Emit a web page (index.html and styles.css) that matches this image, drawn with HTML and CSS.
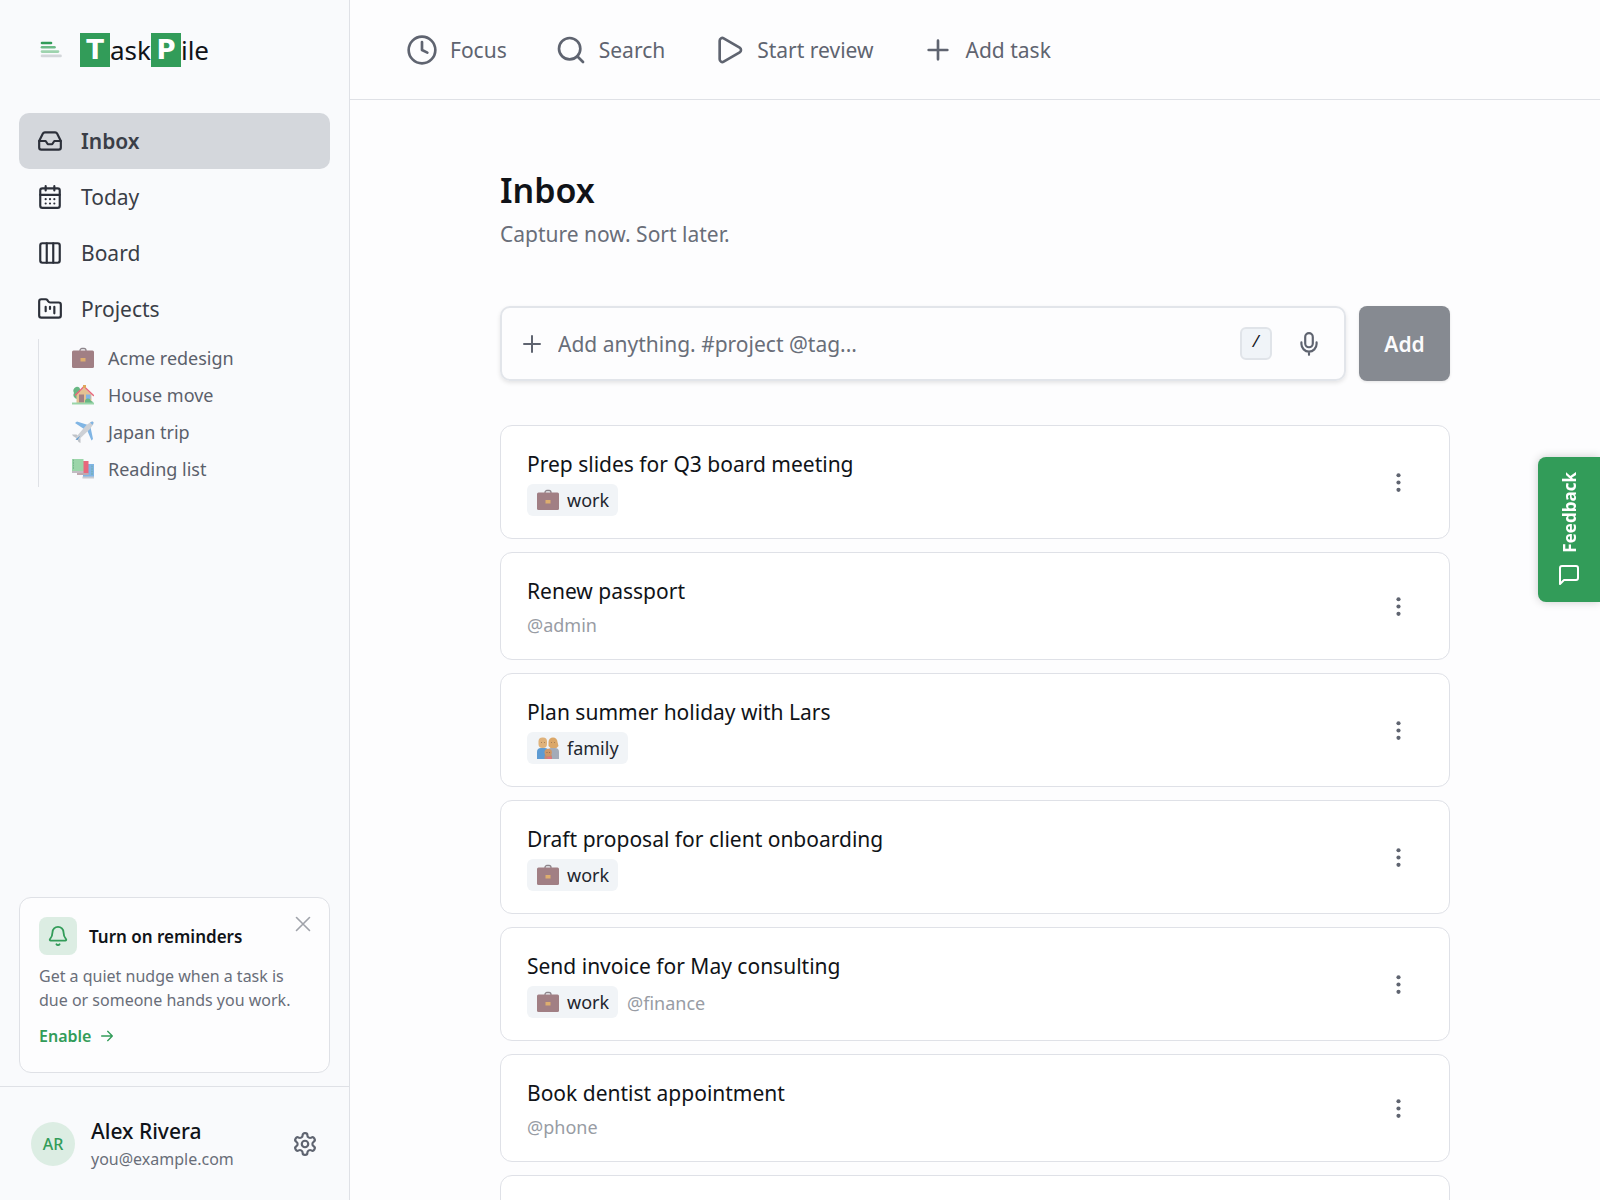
FILE: index.html
```html
<!DOCTYPE html>
<html lang="en">
<head>
    <meta charset="UTF-8">
    <meta name="viewport" content="width=device-width, initial-scale=1.0">
    <title>TaskPile - Inbox</title>
    <link rel="stylesheet" href="styles.css">
</head>
<body>
    <!-- Shared icons -->
    <svg class="sprite" aria-hidden="true">
        <symbol id="dots" viewBox="0 0 24 24">
            <circle cx="12" cy="5" r="2"/><circle cx="12" cy="12" r="2"/><circle cx="12" cy="19" r="2"/>
        </symbol>
        <symbol id="plus" viewBox="0 0 24 24"><path d="M4 12h16M12 4v16"/></symbol>
        <symbol id="briefcase" viewBox="0 0 22 22">
            <path d="M8 4.500V3.500a2 2 0 0 1 2-2h2a2 2 0 0 1 2 2v1" fill="none" stroke="#8d858b" stroke-width="1.300"/>
            <rect x="0" y="3.500" width="22" height="17.500" rx="1.500" fill="#a17f84"/>
            <rect x="8.500" y="11" width="5" height="3.500" fill="#deae6e"/>
        </symbol>
        <symbol id="family" viewBox="0 0 22 22">
            <path d="M0 22v-7a4 4 0 0 1 4-4h4a3 3 0 0 1 3 3v8z" fill="#5d9bd3"/>
            <path d="M11 22v-8a3 3 0 0 1 3-3h4a4 4 0 0 1 4 4v7z" fill="#a3abb8"/>
            <rect x="1.500" y="0.500" width="8.500" height="10.500" rx="4" fill="#dfb27b"/>
            <path d="M11.500 5a4.500 4.500 0 0 1 9 0l1 4-2 2h-6l-2-2z" fill="#dba768"/>
            <circle cx="4.500" cy="5.500" r="0.500" fill="#97744f"/><circle cx="7.500" cy="5.500" r="0.500" fill="#97744f"/>
            <circle cx="14.500" cy="5.500" r="0.500" fill="#97744f"/><circle cx="17.500" cy="5.500" r="0.500" fill="#97744f"/>
            <path d="M7.500 22v-2a3 3 0 0 1 3-3h1.500a3 3 0 0 1 3 3v2z" fill="#c78872"/>
            <circle cx="11.200" cy="15.500" r="3.700" fill="#cf9766"/>
            <circle cx="10" cy="15.500" r="0.500" fill="#7f5d45"/><circle cx="12.600" cy="15.500" r="0.500" fill="#7f5d45"/>
            <rect x="10.500" y="20" width="4" height="2" fill="#e6737f"/>
        </symbol>
    </svg>

    <div class="app">
        <aside class="sidebar">
            <div class="brand">
                <svg class="brand-icon" viewBox="0 0 22 18">
                    <path d="M2 2h9" stroke="#329c59"/>
                    <path d="M2 6.300h12.500" stroke="#6cba87"/>
                    <path d="M2 10.600h16" stroke="#9ed3ae"/>
                    <path d="M2 14.900h18.500" stroke="#d3d6da"/>
                </svg>
                <div class="brand-name"><span class="brand-box">T</span>ask<span class="brand-box">P</span>ile</div>
            </div>

            <nav class="nav">
                <a href="#" class="nav-link active">
                    <svg class="icon" viewBox="0 0 24 24"><path d="M22 12h-6l-2 3h-4l-2-3H2"/><path d="M5.450 5.110 2 12v6a2 2 0 0 0 2 2h16a2 2 0 0 0 2-2v-6l-3.450-6.890A2 2 0 0 0 16.760 4H7.240a2 2 0 0 0-1.790 1.110z"/></svg>
                    Inbox
                </a>
                <a href="#" class="nav-link">
                    <svg class="icon" viewBox="0 0 24 24"><rect x="3" y="4" width="18" height="18" rx="2"/><path d="M8 2v4M16 2v4M3 10h18M8 14h.01M12 14h.01M16 14h.01M8 18h.01M12 18h.01M16 18h.01"/></svg>
                    Today
                </a>
                <a href="#" class="nav-link">
                    <svg class="icon" viewBox="0 0 24 24"><rect x="3" y="3" width="18" height="18" rx="2"/><path d="M9 3v18M15 3v18"/></svg>
                    Board
                </a>
                <a href="#" class="nav-link">
                    <svg class="icon" viewBox="0 0 24 24"><path d="M4 20h16a2 2 0 0 0 2-2V8a2 2 0 0 0-2-2h-7.930a2 2 0 0 1-1.660-.9l-.820-1.200A2 2 0 0 0 7.930 3H4a2 2 0 0 0-2 2v13c0 1.100.9 2 2 2Z"/><path d="M8 10v4M12 10v2M16 10v6"/></svg>
                    Projects
                </a>
                <div class="project-list">
                    <a href="#" class="project-link">
                        <svg class="emoji"><use href="#briefcase"/></svg>
                        Acme redesign
                    </a>
                    <a href="#" class="project-link">
                        <svg class="emoji" viewBox="0 0 22 22">
                            <path d="M4 3a3 3 0 0 1 4 2v13H5v-3a4 4 0 0 1-3-6 4 4 0 0 1 2-6z" fill="#68b784"/>
                            <path d="M4.500 10.500 12 3.500l7.500 7V19h-15z" fill="#e3c193"/>
                            <path d="M3.500 11 12 2.500l9.500 9" fill="none" stroke="#e8687c" stroke-width="1.500"/>
                            <rect x="11" y="1" width="3" height="3" fill="#dfa65c"/>
                            <rect x="7" y="10.500" width="5" height="8" fill="#a17f84"/>
                            <rect x="14" y="10.500" width="4.500" height="4.500" fill="#80b5e4"/>
                            <path d="M13 18a3 3 0 0 1 6-1 2 2 0 0 1 2 2h-8z" fill="#68b784"/>
                            <rect x="0" y="18.500" width="22" height="2" fill="#9bd5a9"/>
                        </svg>
                        House move
                    </a>
                    <a href="#" class="project-link">
                        <svg class="emoji" viewBox="0 0 22 22">
                            <path d="M3 2 5 .5l11 3.500-4 4zM21 18l-1.500 1.500L15 9l3.500-3z" fill="#80b5e4"/>
                            <path d="M0 13.500h4.500l4 4V22l-2-1-1.500-3.500L1 15z" fill="#bfc2c7"/>
                            <path d="M19.500.5c2 0 2.500.5 2 2.500L18 8 7 18.500 4 19l.5-3.500L14.500 4z" fill="#cdd0d5"/>
                            <path d="M18 1.500 20.500 4l1-2.500-1-1z" fill="#80b5e4"/>
                            <path d="m3.500 18.500 5-4-3 4.500z" fill="#5d9bd3"/>
                        </svg>
                        Japan trip
                    </a>
                    <a href="#" class="project-link">
                        <svg class="emoji" viewBox="0 0 22 22">
                            <rect x="11" y="6" width="11" height="13" fill="#80b5e4"/>
                            <rect x="10.500" y="18.500" width="11.500" height="2" fill="#c7cad0"/>
                            <rect x="6" y="3" width="10.500" height="12.500" fill="#e8687c"/>
                            <rect x="5" y="15" width="11.500" height="2" fill="#bfa9b0"/>
                            <rect x="0" y="1" width="11.500" height="12" fill="#9bd5a9"/>
                            <rect x="0" y="13" width="11.500" height="2" fill="#c1bcc2"/>
                            <path d="M1.500 2v10M20 8v9" stroke="#68a884" stroke-width="0.700" stroke-dasharray="1 1.500"/>
                        </svg>
                        Reading list
                    </a>
                </div>
            </nav>

            <section class="reminder">
                <div class="reminder-top">
                    <span class="reminder-icon">
                        <svg viewBox="0 0 24 24"><path d="M10.300 21a1.940 1.940 0 0 0 3.400 0"/><path d="M3.260 15.330A1 1 0 0 0 4 17h16a1 1 0 0 0 .740-1.670C19.410 13.960 18 12.500 18 8A6 6 0 0 0 6 8c0 4.500-1.410 5.960-2.740 7.330"/></svg>
                    </span>
                    <h2>Turn on reminders</h2>
                    <button class="close-btn" aria-label="Dismiss">
                        <svg viewBox="0 0 24 24"><path d="M18 6 6 18M6 6l12 12"/></svg>
                    </button>
                </div>
                <p>Get a quiet nudge when a task is due or someone hands you work.</p>
                <a href="#" class="enable-link">
                    Enable
                    <svg viewBox="0 0 24 24"><path d="M4 12h16M13 5l7 7-7 7"/></svg>
                </a>
            </section>

            <footer class="account">
                <div class="avatar">AR</div>
                <div class="account-info">
                    <div class="account-name">Alex Rivera</div>
                    <div class="account-email">you@example.com</div>
                </div>
                <button class="icon-btn" aria-label="Settings">
                    <svg class="icon" viewBox="0 0 24 24"><path d="M12.220 2h-.440a2 2 0 0 0-2 2v.180a2 2 0 0 1-1 1.730l-.430.250a2 2 0 0 1-2 0l-.150-.080a2 2 0 0 0-2.730.730l-.220.380a2 2 0 0 0 .730 2.730l.150.100a2 2 0 0 1 1 1.720v.510a2 2 0 0 1-1 1.740l-.150.090a2 2 0 0 0-.730 2.730l.220.380a2 2 0 0 0 2.730.730l.150-.080a2 2 0 0 1 2 0l.430.250a2 2 0 0 1 1 1.730V20a2 2 0 0 0 2 2h.440a2 2 0 0 0 2-2v-.180a2 2 0 0 1 1-1.730l.430-.250a2 2 0 0 1 2 0l.150.080a2 2 0 0 0 2.730-.730l.220-.390a2 2 0 0 0-.730-2.730l-.150-.080a2 2 0 0 1-1-1.740v-.5a2 2 0 0 1 1-1.740l.150-.090a2 2 0 0 0 .730-2.730l-.220-.380a2 2 0 0 0-2.730-.730l-.150.080a2 2 0 0 1-2 0l-.430-.250a2 2 0 0 1-1-1.730V4a2 2 0 0 0-2-2z"/><circle cx="12" cy="12" r="3"/></svg>
                </button>
            </footer>
        </aside>

        <div class="page">
            <header class="topbar">
                <button class="top-btn">
                    <svg viewBox="0 0 24 24"><circle cx="12" cy="12" r="10"/><path d="M12 6v6l4 2"/></svg>
                    Focus
                </button>
                <button class="top-btn">
                    <svg viewBox="0 0 24 24"><circle cx="11" cy="11" r="8"/><path d="m21 21-4.300-4.300"/></svg>
                    Search
                </button>
                <button class="top-btn">
                    <svg viewBox="0 0 24 24"><path d="M5 5a2 2 0 0 1 3.008-1.728l11.997 6.998a2 2 0 0 1 .003 3.458l-12 7A2 2 0 0 1 5 19z"/></svg>
                    Start review
                </button>
                <button class="top-btn">
                    <svg viewBox="0 0 24 24"><path d="M5 12h14M12 5v14"/></svg>
                    Add task
                </button>
            </header>

            <main class="content">
                <h1>Inbox</h1>
                <p class="subtitle">Capture now. Sort later.</p>

                <form class="add-form">
                    <div class="add-field">
                        <svg class="icon-small"><use href="#plus"/></svg>
                        <input type="text" aria-label="New task" placeholder="Add anything. #project @tag...">
                        <kbd>/</kbd>
                        <button type="button" class="icon-btn" aria-label="Dictate">
                            <svg class="icon" viewBox="0 0 24 24"><rect x="8.500" y="2" width="7" height="13" rx="3.500"/><path d="M5 10.500V12a7 7 0 0 0 14 0v-1.500M12 19v3"/></svg>
                        </button>
                    </div>
                    <button type="submit" class="add-btn">Add</button>
                </form>

                <div class="tasks">
                    <article class="task">
                        <div class="task-body">
                            <h3>Prep slides for Q3 board meeting</h3>
                            <div class="task-meta">
                                <span class="chip"><svg class="emoji"><use href="#briefcase"/></svg>work</span>
                            </div>
                        </div>
                        <button class="menu-btn" aria-label="Task menu"><svg><use href="#dots"/></svg></button>
                    </article>
                    <article class="task">
                        <div class="task-body">
                            <h3>Renew passport</h3>
                            <div class="task-meta"><span class="tag">@admin</span></div>
                        </div>
                        <button class="menu-btn" aria-label="Task menu"><svg><use href="#dots"/></svg></button>
                    </article>
                    <article class="task">
                        <div class="task-body">
                            <h3>Plan summer holiday with Lars</h3>
                            <div class="task-meta">
                                <span class="chip"><svg class="emoji"><use href="#family"/></svg>family</span>
                            </div>
                        </div>
                        <button class="menu-btn" aria-label="Task menu"><svg><use href="#dots"/></svg></button>
                    </article>
                    <article class="task">
                        <div class="task-body">
                            <h3>Draft proposal for client onboarding</h3>
                            <div class="task-meta">
                                <span class="chip"><svg class="emoji"><use href="#briefcase"/></svg>work</span>
                            </div>
                        </div>
                        <button class="menu-btn" aria-label="Task menu"><svg><use href="#dots"/></svg></button>
                    </article>
                    <article class="task">
                        <div class="task-body">
                            <h3>Send invoice for May consulting</h3>
                            <div class="task-meta">
                                <span class="chip"><svg class="emoji"><use href="#briefcase"/></svg>work</span>
                                <span class="tag">@finance</span>
                            </div>
                        </div>
                        <button class="menu-btn" aria-label="Task menu"><svg><use href="#dots"/></svg></button>
                    </article>
                    <article class="task">
                        <div class="task-body">
                            <h3>Book dentist appointment</h3>
                            <div class="task-meta"><span class="tag">@phone</span></div>
                        </div>
                        <button class="menu-btn" aria-label="Task menu"><svg><use href="#dots"/></svg></button>
                    </article>
                    <article class="task empty"></article>
                </div>
            </main>
        </div>
    </div>

    <button class="feedback">
        <span>Feedback</span>
        <svg viewBox="0 0 24 24"><path d="M21 15a2 2 0 0 1-2 2H7l-4 4V5a2 2 0 0 1 2-2h14a2 2 0 0 1 2 2z"/></svg>
    </button>
</body>
</html>
```
FILE: styles.css
```css
*, *:before, *:after {
    margin: 0;
    padding: 0;
    box-sizing: border-box;
}

body {
    font-family: "Noto Sans", sans-serif;
    font-size: 21px;
    color: #101318;
    background-color: #fdfdfe;
}

button {
    font: inherit;
    color: inherit;
    background: none;
    border: none;
    cursor: pointer;
}

a {
    color: inherit;
    text-decoration: none;
}

svg {
    flex-shrink: 0;
    display: block;
    fill: none;
    stroke: currentColor;
    stroke-width: 2;
    stroke-linecap: round;
    stroke-linejoin: round;
}

.sprite {
    display: none;
}

.icon {
    width: 26px;
    height: 26px;
}

.icon-small {
    width: 24px;
    height: 24px;
}

.emoji {
    width: 22px;
    height: 22px;
    stroke: none;
}

.app {
    display: flex;
    height: 100vh;
    overflow: hidden;
}

/* Sidebar */
.sidebar {
    width: 350px;
    flex-shrink: 0;
    display: flex;
    flex-direction: column;
    background-color: #f9fafc;
    border-right: 1px solid #dfe1e6;
}

.brand {
    display: flex;
    align-items: center;
    gap: 18px;
    height: 100px;
    padding-left: 40px;
}

.brand-icon {
    width: 22px;
    height: 18px;
    stroke-width: 2.6;
}

.brand-name {
    display: flex;
    align-items: center;
    font-size: 26px;
    line-height: 34px;
}

.brand-box {
    width: 30px;
    text-align: center;
    font-family: "DejaVu Sans", sans-serif;
    font-weight: 700;
    color: #fff;
    background-color: #329c59;
}

.nav {
    flex: 1;
    padding: 13px 19px;
}

.nav-link {
    display: flex;
    align-items: center;
    gap: 18px;
    height: 56px;
    padding: 0 18px;
    border-radius: 10px;
    color: #3a3e47;
}

.nav-link.active {
    font-weight: 600;
    background-color: #d4d7dc;
}

.nav-link svg {
    color: #2c303a;
}

.project-list {
    margin: 2px 0 0 19px;
    padding-left: 33px;
    border-left: 1px solid #dfe1e6;
}

.project-link {
    display: flex;
    align-items: center;
    gap: 14px;
    height: 37px;
    font-size: 18px;
    color: #5b606b;
}

.reminder {
    margin: 0 19px 13px;
    padding: 19px 19px 24px;
    border: 1px solid #dfe1e6;
    border-radius: 12px;
    background-color: #fdfdfe;
}

.reminder-top {
    display: flex;
    align-items: center;
    gap: 12px;
    margin-bottom: 9px;
}

.reminder-icon {
    display: flex;
    align-items: center;
    justify-content: center;
    width: 38px;
    height: 38px;
    border-radius: 8px;
    color: #329c59;
    background-color: #dcede3;
}

.reminder-icon svg {
    width: 22px;
    height: 22px;
}

.reminder h2 {
    flex: 1;
    font-size: 17px;
    font-weight: 600;
}

.close-btn {
    align-self: flex-start;
    margin-top: -6px;
    margin-right: -6px;
    color: #a0a3aa;
}

.close-btn svg {
    width: 26px;
    height: 26px;
    stroke-width: 1.5;
}

.reminder p {
    font-size: 16px;
    line-height: 24px;
    color: #696e79;
}

.enable-link {
    display: inline-flex;
    align-items: center;
    gap: 8px;
    margin-top: 12px;
    font-size: 16px;
    line-height: 24px;
    font-weight: 600;
    color: #329c59;
}

.enable-link svg {
    width: 16px;
    height: 16px;
}

.account {
    display: flex;
    align-items: center;
    gap: 16px;
    height: 114px;
    padding: 0 31px;
    border-top: 1px solid #dfe1e6;
}

.avatar {
    width: 44px;
    height: 44px;
    border-radius: 50%;
    font-size: 16px;
    line-height: 44px;
    font-weight: 500;
    text-align: center;
    color: #329c59;
    background-color: #dcede3;
}

.account-info {
    flex: 1;
}

.account-name {
    line-height: 30px;
    font-weight: 500;
}

.account-email {
    font-size: 16px;
    line-height: 26px;
    color: #696e79;
}

.icon-btn {
    color: #5f6470;
}

/* Top bar */
.page {
    flex: 1;
    min-width: 0;
    display: flex;
    flex-direction: column;
}

.topbar {
    flex-shrink: 0;
    display: flex;
    align-items: center;
    gap: 48px;
    height: 100px;
    padding-left: 56px;
    border-bottom: 1px solid #dfe1e6;
}

.top-btn {
    display: flex;
    align-items: center;
    gap: 12px;
    color: #5f6470;
}

.top-btn svg {
    width: 32px;
    height: 32px;
}

/* Content */
.content {
    width: 100%;
    max-width: 950px;
    margin: 0 auto;
    padding-top: 65px;
}

h1 {
    font-size: 34px;
    line-height: 50px;
    font-weight: 600;
}

.subtitle {
    line-height: 38px;
    color: #696e79;
}

.add-form {
    display: flex;
    gap: 13px;
    margin: 53px 0 44px;
}

.add-field {
    flex: 1;
    display: flex;
    align-items: center;
    gap: 14px;
    height: 75px;
    padding: 0 22px 0 18px;
    border: 2px solid #e2e5ea;
    border-radius: 10px;
    box-shadow: 0 2px 4px rgba(0, 0, 0, 0.1);
}

.add-field svg {
    color: #5f6470;
}

.add-field input {
    flex: 1;
    min-width: 0;
    border: none;
    outline: none;
    background: none;
    font: inherit;
}

.add-field input::placeholder {
    color: #696e79;
}

kbd {
    width: 32px;
    height: 33px;
    margin-right: 10px;
    border: 2px solid #e0e4e9;
    border-radius: 6px;
    font-family: "Liberation Mono", monospace;
    font-size: 17px;
    line-height: 28px;
    text-align: center;
    background-color: #f0f4f8;
}

.add-btn {
    width: 91px;
    border-radius: 8px;
    font-weight: 600;
    color: #fbfbfc;
    background-color: #868a91;
    box-shadow: 0 1px 3px rgba(0, 0, 0, 0.1);
}

.tasks {
    display: flex;
    flex-direction: column;
    gap: 13px;
}

.task {
    display: flex;
    align-items: center;
    padding: 22px 38px 22px 26px;
    border: 1px solid #dfe1e7;
    border-radius: 12px;
    background-color: #fff;
}

.task.empty {
    height: 108px;
}

.task-body {
    flex: 1;
}

.task h3 {
    margin-bottom: 4px;
    font-size: 21px;
    line-height: 32px;
    font-weight: 400;
}

.task-meta {
    display: flex;
    align-items: center;
    gap: 9px;
}

.chip {
    display: flex;
    align-items: center;
    gap: 8px;
    height: 32px;
    padding: 0 9px 0 10px;
    border-radius: 6px;
    font-size: 18px;
    color: #22262e;
    background-color: #f1f4f7;
}

.tag {
    padding-top: 3px;
    font-size: 18px;
    line-height: 23px;
    color: #989ca4;
}

.menu-btn svg {
    width: 25px;
    height: 25px;
    fill: #5f6470;
    stroke: none;
}

/* Feedback tab */
.feedback {
    position: fixed;
    top: 457px;
    right: 0;
    display: flex;
    flex-direction: column;
    align-items: center;
    gap: 10px;
    width: 62px;
    padding: 15px 0;
    border-radius: 8px 0 0 8px;
    font-size: 17px;
    font-weight: 700;
    color: #fff;
    background-color: #329c59;
    box-shadow: 0 0 10px rgba(0, 0, 0, 0.2);
}

.feedback span {
    writing-mode: vertical-rl;
    transform: rotate(180deg);
}

.feedback svg {
    width: 24px;
    height: 24px;
}
```
